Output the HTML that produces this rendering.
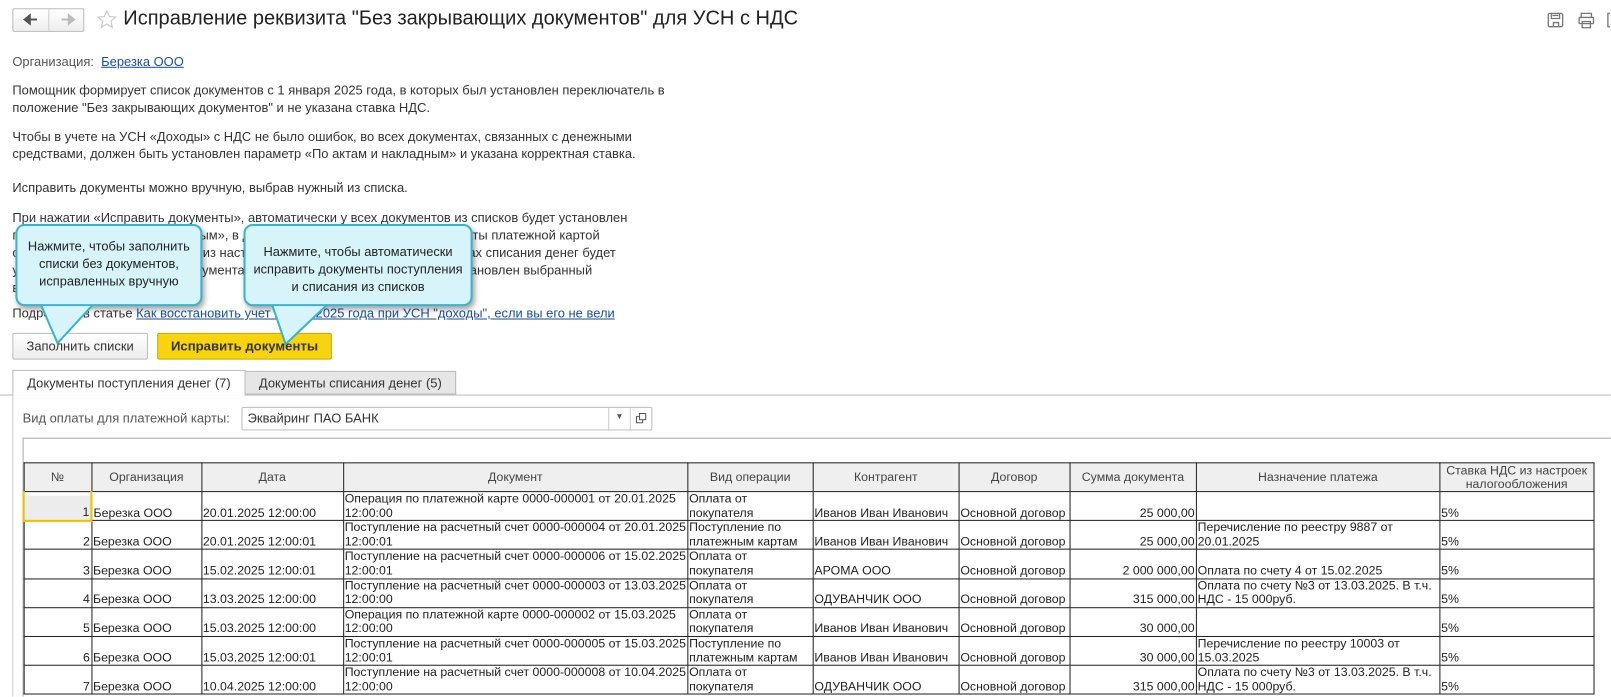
<!DOCTYPE html>
<html><head><meta charset="utf-8"><style>
*{box-sizing:border-box;margin:0;padding:0}
body{width:1611px;height:696px;overflow:hidden;background:#fff;font-family:"Liberation Sans",Arial,sans-serif;color:#333;position:relative;font-size:13px}
#w{position:absolute;left:0;top:0;width:1568px;height:678px;transform:scale(1.0274);transform-origin:0 0;overflow:hidden}
.a{position:absolute;white-space:nowrap}
.p{position:absolute;left:12px;line-height:17px;font-size:12.6px;color:#333;white-space:nowrap}
a{color:#1a4fa0;text-decoration:underline}
.call{position:absolute;background:#d6f4fa;border:2px solid #39b4c8;border-radius:9px;box-shadow:2px 3px 5px rgba(0,0,0,.35);text-align:center;font-size:12.5px;line-height:17px;color:#222}
table{border-collapse:collapse;table-layout:fixed;position:absolute;left:22px;top:450px;font-size:12px;color:#222}
td,th{border:1px solid #222;line-height:13.6px;vertical-align:bottom;overflow:hidden;white-space:nowrap;padding:0 1px}
th{background:#efefef;font-weight:normal;vertical-align:middle;text-align:center;height:28px;color:#444}
td{height:28.2px}
.r{text-align:right}
</style></head><body><div id="w">
<!-- nav -->
<div class="a" style="left:12px;top:8px;width:70px;height:23px;border:1px solid #bbb;border-radius:2px;background:linear-gradient(#fff,#eee)"></div>
<div class="a" style="left:47px;top:9px;width:1px;height:21px;background:#ccc"></div>
<svg class="a" style="left:22px;top:13px" width="60" height="12"><path d="M2 6h12M2 6l5-4v8z" stroke="#555" stroke-width="2" fill="#555"/><path d="M50 6H38M50 6l-5-4v8z" stroke="#bbb" stroke-width="2" fill="#bbb"/></svg>
<svg class="a" style="left:94px;top:9px" width="20" height="20" viewBox="0 0 20 20"><path d="M10 1.5l2.5 5.5 6 .6-4.5 4 1.3 6L10 14.5 4.7 17.6 6 11.6 1.5 7.6l6-.6z" fill="none" stroke="#ccc" stroke-width="1.2"/></svg>
<div class="a" style="left:120px;top:7px;font-size:19.5px;color:#222">Исправление реквизита "Без закрывающих документов" для УСН с НДС</div>
<svg class="a" style="left:1506px;top:12px" width="62" height="16" viewBox="0 0 62 16" fill="none" stroke="#777" stroke-width="1.3">
<rect x="1" y="1" width="14" height="13" rx="1.5"/><path d="M4 1v5h8V1M5 3h6M6 14v-4h5v4"/>
<rect x="31" y="5" width="14" height="6" rx="1"/><path d="M33 5V1h10v4M34 9h8v6h-8z"/>
<path d="M61 1h-2v13h2"/></svg>
<!-- text -->
<div class="a" style="left:12px;top:53px;font-size:12.6px;color:#555">Организация:&nbsp; <a>Березка ООО</a></div>
<div class="p" style="top:80px">Помощник формирует список документов с 1 января 2025 года, в которых был установлен переключатель в<br>положение "Без закрывающих документов" и не указана ставка НДС.</div>
<div class="p" style="top:125px">Чтобы в учете на УСН «Доходы» с НДС не было ошибок, во всех документах, связанных с денежными<br>средствами, должен быть установлен параметр «По актам и накладным» и указана корректная ставка.</div>
<div class="p" style="top:175px">Исправить документы можно вручную, выбрав нужный из списка.</div>
<div class="p" style="top:204px">При нажатии «Исправить документы», автоматически у всех документов из списков будет установлен<br>параметр «По актам и накладным», в документах поступления денег и оплаты платежной картой<br>ставка НДС будет установлена из настроек налогообложения, а в документах списания денег будет<br>установлена ставка НДС. В документах оплаты платежной картой будет установлен выбранный<br>вид оплаты.</div>
<div class="p" style="top:297px">Подробнее в статье <a>Как восстановить учет НДС в 2025 года при УСН "доходы", если вы его не вели</a></div>
<!-- buttons -->
<div class="a" style="left:12px;top:324px;width:132px;height:26px;border:1px solid #bbb;border-radius:2px;background:linear-gradient(#fff,#ececec);text-align:center;line-height:24px;font-size:12.6px;color:#333">Заполнить списки</div>
<div class="a" style="left:153px;top:324px;width:170px;height:26px;border:1px solid #c9a600;border-radius:2px;background:#f8d40e;text-align:center;line-height:24px;font-size:12.8px;font-weight:bold;color:#333">Исправить документы</div>
<!-- callouts -->
<div class="call" style="left:15px;top:218px;width:182px;height:80px;padding-top:12px">Нажмите, чтобы заполнить<br>списки без документов,<br>исправленных вручную</div>
<div class="call" style="left:237px;top:218px;width:223px;height:80px;padding-top:17px">Нажмите, чтобы автоматически<br>исправить документы поступления<br>и списания из списков</div>
<svg class="a" style="left:0;top:290px" width="340" height="50"><path d="M40 8 L56 44 L90 8" fill="#d6f4fa" stroke="none"/><path d="M40 7 L56 44 L90 7" fill="none" stroke="#39b4c8" stroke-width="2"/><path d="M265 8 L278 45 L318 8" fill="#d6f4fa"/><path d="M265 7 L278 45 L318 7" fill="none" stroke="#39b4c8" stroke-width="2"/></svg>
<!-- tabs -->
<div class="a" style="left:0;top:384px;width:1611px;height:1px;background:#bbb"></div>
<div class="a" style="left:12px;top:360px;width:227px;height:25px;border:1px solid #bbb;border-bottom:none;background:#fff;text-align:center;line-height:24px;font-size:12.6px;color:#333">Документы поступления денег (7)</div>
<div class="a" style="left:239px;top:361px;width:205px;height:23px;border:1px solid #bbb;border-left:none;background:#e6e6e6;text-align:center;line-height:22px;font-size:12.6px;color:#333">Документы списания денег (5)</div>
<div class="a" style="left:12px;top:385px;width:1px;height:311px;background:#ccc"></div>
<!-- field -->
<div class="a" style="left:22px;top:400px;font-size:12.6px;color:#555">Вид оплаты для платежной карты:</div>
<div class="a" style="left:235px;top:396px;width:400px;height:23px;border:1px solid #bbb;border-radius:2px"></div>
<div class="a" style="left:241px;top:400px;font-size:12.6px;color:#333">Эквайринг ПАО БАНК</div>
<div class="a" style="left:592px;top:397px;width:1px;height:21px;background:#ccc"></div>
<div class="a" style="left:613px;top:397px;width:1px;height:21px;background:#ccc"></div>
<div class="a" style="left:599px;top:401px;font-size:8px;color:#555">▼</div>
<svg class="a" style="left:618px;top:401px" width="12" height="12" fill="none" stroke="#555"><rect x="4.5" y="1.5" width="6" height="6"/><path d="M4.5 4.5h-3v6h6v-3"/></svg>
<!-- table box -->
<div class="a" style="left:22px;top:426px;width:1600px;height:280px;border:1px solid #aaa;border-right:none"></div>
<table>
<colgroup><col style="width:66px"><col style="width:107px"><col style="width:138px"><col style="width:335px"><col style="width:122px"><col style="width:142px"><col style="width:108px"><col style="width:123px"><col style="width:237px"><col style="width:150px"></colgroup>
<tr><th>№</th><th>Организация</th><th>Дата</th><th>Документ</th><th>Вид операции</th><th>Контрагент</th><th>Договор</th><th>Сумма документа</th><th>Назначение платежа</th><th style="line-height:13px">Ставка НДС из настроек<br>налогообложения</th></tr>
<tr><td class="r" style="background:linear-gradient(to bottom,#fff 3px,#ececec 3px);border-left:2px solid #f0c000;border-bottom:2px solid #f0c000;border-right:2px solid #f0c000">1</td><td>Березка ООО</td><td>20.01.2025 12:00:00</td><td>Операция по платежной карте 0000-000001 от 20.01.2025<br>12:00:00</td><td>Оплата от<br>покупателя</td><td>Иванов Иван Иванович</td><td>Основной договор</td><td class="r">25 000,00</td><td></td><td>5%</td></tr>
<tr><td class="r">2</td><td>Березка ООО</td><td>20.01.2025 12:00:01</td><td>Поступление на расчетный счет 0000-000004 от 20.01.2025<br>12:00:01</td><td>Поступление по<br>платежным картам</td><td>Иванов Иван Иванович</td><td>Основной договор</td><td class="r">25 000,00</td><td>Перечисление по реестру 9887 от<br>20.01.2025</td><td>5%</td></tr>
<tr><td class="r">3</td><td>Березка ООО</td><td>15.02.2025 12:00:01</td><td>Поступление на расчетный счет 0000-000006 от 15.02.2025<br>12:00:01</td><td>Оплата от<br>покупателя</td><td>АРОМА ООО</td><td>Основной договор</td><td class="r">2 000 000,00</td><td>Оплата по счету 4 от 15.02.2025</td><td>5%</td></tr>
<tr><td class="r">4</td><td>Березка ООО</td><td>13.03.2025 12:00:00</td><td>Поступление на расчетный счет 0000-000003 от 13.03.2025<br>12:00:00</td><td>Оплата от<br>покупателя</td><td>ОДУВАНЧИК ООО</td><td>Основной договор</td><td class="r">315 000,00</td><td>Оплата по счету №3 от 13.03.2025. В т.ч.<br>НДС - 15 000руб.</td><td>5%</td></tr>
<tr><td class="r">5</td><td>Березка ООО</td><td>15.03.2025 12:00:00</td><td>Операция по платежной карте 0000-000002 от 15.03.2025<br>12:00:00</td><td>Оплата от<br>покупателя</td><td>Иванов Иван Иванович</td><td>Основной договор</td><td class="r">30 000,00</td><td></td><td>5%</td></tr>
<tr><td class="r">6</td><td>Березка ООО</td><td>15.03.2025 12:00:01</td><td>Поступление на расчетный счет 0000-000005 от 15.03.2025<br>12:00:01</td><td>Поступление по<br>платежным картам</td><td>Иванов Иван Иванович</td><td>Основной договор</td><td class="r">30 000,00</td><td>Перечисление по реестру 10003 от<br>15.03.2025</td><td>5%</td></tr>
<tr><td class="r">7</td><td>Березка ООО</td><td>10.04.2025 12:00:00</td><td>Поступление на расчетный счет 0000-000008 от 10.04.2025<br>12:00:00</td><td>Оплата от<br>покупателя</td><td>ОДУВАНЧИК ООО</td><td>Основной договор</td><td class="r">315 000,00</td><td>Оплата по счету №3 от 13.03.2025. В т.ч.<br>НДС - 15 000руб.</td><td>5%</td></tr>
</table>
</div></body></html>
